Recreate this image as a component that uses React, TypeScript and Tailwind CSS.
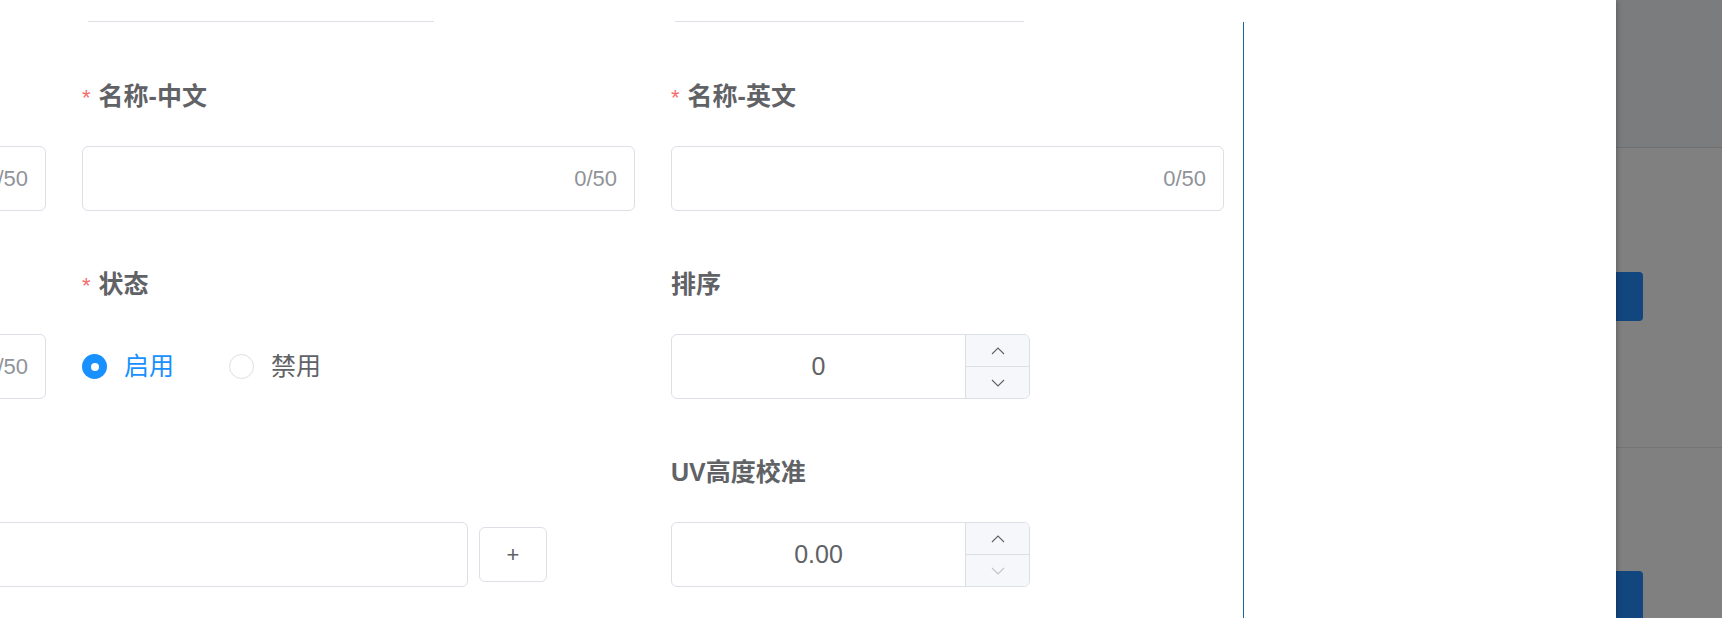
import React from "react";

const font = { fontFamily: '"Liberation Sans", "Noto Sans CJK SC", sans-serif' };

function Label({ text, required }: { text?: string; required?: boolean }) {
  return (
    <div className="flex h-[40px] items-center text-[25px] font-semibold text-[#606266]">
      {required && <span className="mr-[8px] text-[22px] font-normal text-[#f56c6c]">*</span>}
      {text}
    </div>
  );
}

function CountInput() {
  return (
    <div className="flex h-[65px] items-center justify-end rounded-[6px] border border-[#dcdfe6] bg-white pr-[17px] text-[22px] text-[#909399]">
      0/50
    </div>
  );
}

function Chevron({ up, disabled }: { up?: boolean; disabled?: boolean }) {
  return (
    <svg width="16" height="10" viewBox="0 0 16 10" fill="none">
      <path
        d={up ? "M2 8 L8 2 L14 8" : "M2 2 L8 8 L14 2"}
        stroke={disabled ? "#c0c4cc" : "#606266"}
        strokeWidth="1.1"
      />
    </svg>
  );
}

function NumberInput({ value, downDisabled }: { value: string; downDisabled?: boolean }) {
  return (
    <div className="flex h-[65px] w-[359px] overflow-hidden rounded-[6px] border border-[#dcdfe6] bg-white">
      <div className="flex flex-1 items-center justify-center text-[25px] text-[#606266]">{value}</div>
      <div className="flex w-[64px] flex-col border-l border-[#dcdfe6] bg-[#f5f7fa]">
        <div className="flex flex-1 items-center justify-center border-b border-[#dcdfe6]">
          <Chevron up />
        </div>
        <div className="flex flex-1 items-center justify-center">
          <Chevron disabled={downDisabled} />
        </div>
      </div>
    </div>
  );
}

function Radio({ label, checked }: { label: string; checked?: boolean }) {
  return (
    <div className="flex items-center">
      {checked ? (
        <span className="flex h-[25px] w-[25px] items-center justify-center rounded-full bg-[#1890ff]">
          <span className="h-[8px] w-[8px] rounded-full bg-white" />
        </span>
      ) : (
        <span className="h-[25px] w-[25px] rounded-full border border-[#dcdfe6] bg-white" />
      )}
      <span className={`ml-[17px] text-[25px] ${checked ? "text-[#1890ff]" : "text-[#606266]"}`}>
        {label}
      </span>
    </div>
  );
}

function Item({ label, required, children, className }: { label?: string; required?: boolean; children: React.ReactNode; className?: string }) {
  return (
    <div className={`flex flex-col gap-[29px] ${className ?? ""}`}>
      <Label text={label} required={required} />
      {children}
    </div>
  );
}

export default function App() {
  return (
    <div className="flex h-[618px] w-[1722px] overflow-hidden bg-[#808080]" style={font}>
      <div className="relative z-10 flex h-full w-[1616px] shrink-0 bg-white shadow-[0_0_6px_rgba(0,0,0,0.35)]">
        <div className="h-full w-[1243px] shrink-0 overflow-hidden">
          <div className="ml-[-507px] pt-[21px]">
            <div className="mb-[55px] grid grid-cols-[553px_553px_553px] gap-x-[36px]">
              <div />
              <div className="ml-[6px] h-px w-[346px] bg-[#dcdfe6]" />
              <div className="ml-[4px] h-px w-[349px] bg-[#dcdfe6]" />
            </div>
            <div className="grid grid-cols-[553px_553px_553px] gap-x-[36px] gap-y-[54px]">
              <Item>
                <CountInput />
              </Item>
              <Item label="名称-中文" required>
                <CountInput />
              </Item>
              <Item label="名称-英文" required>
                <CountInput />
              </Item>

              <Item>
                <CountInput />
              </Item>
              <Item label="状态" required>
                <div className="flex h-[65px] items-center gap-[55px]">
                  <Radio label="启用" checked />
                  <Radio label="禁用" />
                </div>
              </Item>
              <Item label="排序">
                <NumberInput value="0" />
              </Item>

              <Item className="col-span-2">
                <div className="flex h-[65px] items-center gap-[11px] pr-[88px]">
                  <div className="h-[65px] flex-1 rounded-[6px] border border-[#dcdfe6] bg-white" />
                  <button className="flex h-[55px] w-[68px] items-center justify-center rounded-[6px] border border-[#dcdfe6] bg-white text-[22px] text-[#606266]">
                    +
                  </button>
                </div>
              </Item>
              <Item label="UV高度校准">
                <NumberInput value="0.00" downDisabled />
              </Item>
            </div>
          </div>
        </div>
        <div className="mt-[22px] flex-1 border-l border-[#176c9c]" />
      </div>
      <div className="flex flex-1 flex-col">
        <div className="h-[148px] shrink-0 border-b border-[#6e6f71] bg-[#7b7c7e]" />
        <div className="h-[300px] shrink-0 border-b border-[#737476] bg-[#808080] pt-[124px]">
          <div className="h-[49px] w-[27px] rounded-r-[4px] bg-[#12467f]" />
        </div>
        <div className="flex-1 bg-[#808080] pt-[123px]">
          <div className="h-[60px] w-[27px] rounded-r-[4px] bg-[#12467f]" />
        </div>
      </div>
    </div>
  );
}
